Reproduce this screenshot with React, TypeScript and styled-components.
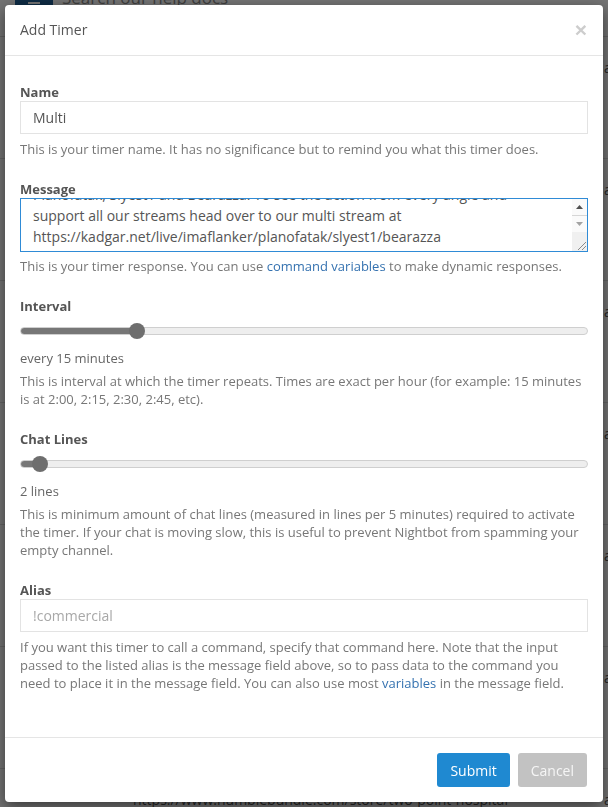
import React, { useEffect, useRef } from "react";
import styled, { createGlobalStyle } from "styled-components";

const GlobalStyle = createGlobalStyle`
  * { box-sizing: border-box; }
  html, body { margin: 0; padding: 0; height: 100%; overflow: hidden; }
  body {
    font-family: "Open Sans", "Liberation Sans", sans-serif;
    background: #fff;
    color: #555;
  }
`;

/* ---------- page behind the dialog ---------- */

const Page = styled.div`
  height: 100vh;
  overflow: hidden;
  background: #f4f4f4;
`;

const TopBar = styled.header`
  display: flex;
  align-items: flex-start;
  gap: 9px;
  height: 68px;
  margin-top: -31px;
  padding-left: 15px;
  background: #fff;
  border-bottom: 1px solid #d8d8d8;
`;

const MenuButton = styled.div`
  width: 38px;
  height: 36px;
  background: #1f5f96;
  display: flex;
  flex-direction: column;
  justify-content: flex-end;
  align-items: center;
  gap: 4px;
  padding-bottom: 1px;
`;

const MenuBar = styled.span`
  width: 12px;
  height: 2px;
  background: #fff;
`;

const SearchText = styled.div`
  padding-top: 11px;
  font-size: 17px;
  line-height: 36px;
  color: #8a8a8a;
`;

const TimerRow = styled.div`
  display: flex;
  height: 122px;
  padding-top: 21px;
  border-bottom: 1px solid #ddd;
  background: #fff;
`;

const RowMessage = styled.div`
  flex: 0 0 604px;
  padding-left: 133px;
  font-size: 14px;
  line-height: 20px;
  color: #555;
`;

const RowAction = styled.div`
  font-size: 14px;
  line-height: 20px;
  color: #555;
`;

/* ---------- dialog ---------- */

const Backdrop = styled.div`
  position: fixed;
  inset: 0;
  background: rgba(0, 0, 0, 0.55);
`;

const DialogLayer = styled.div`
  position: fixed;
  inset: 0;
  padding: 5px 0 0 5px;
`;

const Modal = styled.div`
  width: 598px;
  height: 797px;
  background: #fff;
  border-radius: 4px;
  box-shadow: 0 5px 15px rgba(0, 0, 0, 0.5);
  display: flex;
  flex-direction: column;
`;

const Header = styled.div`
  height: 51px;
  flex: 0 0 auto;
  display: flex;
  align-items: center;
  justify-content: space-between;
  padding: 0 16px 1px 15px;
  border-bottom: 1px solid #e5e5e5;
`;

const Title = styled.h4`
  margin: 0;
  font-size: 14px;
  font-weight: 400;
  color: #555;
`;

const Close = styled.button`
  border: 0;
  background: none;
  padding: 0;
  font-family: "Liberation Sans", sans-serif;
  font-size: 21px;
  font-weight: 700;
  line-height: 1;
  color: #cdcdcd;
  cursor: pointer;
`;

const Body = styled.div`
  flex: 1;
  padding: 27px 15px 0 15px;
`;

const Group = styled.div`
  margin-bottom: 22px;
`;

const Label = styled.label`
  display: block;
  font-size: 13px;
  font-weight: 700;
  line-height: 18px;
  color: #555;
`;

const TextInput = styled.input`
  display: block;
  width: 100%;
  height: 33px;
  padding: 0 12px;
  border: 1px solid #e3e3e3;
  border-radius: 0;
  font-family: inherit;
  font-size: 14px;
  color: #555;
  outline: none;
  &::placeholder {
    color: #a8a8a8;
  }
`;

const AreaWrap = styled.div`
  position: relative;
  height: 54px;
`;

const TextArea = styled.textarea`
  display: block;
  width: 100%;
  height: 54px;
  padding: 6px 28px 4px 12px;
  border: 1px solid #2f8bd6;
  border-radius: 0;
  font-family: inherit;
  font-size: 14px;
  line-height: 21px;
  color: #555;
  caret-color: #222;
  resize: none;
  outline: none;
  overflow-y: scroll;
  scrollbar-width: none;
  &::-webkit-scrollbar {
    display: none;
  }
`;

const ScrollBar = styled.div`
  position: absolute;
  top: 1px;
  right: 1px;
  bottom: 1px;
  width: 15px;
  display: flex;
  flex-direction: column;
  background: #fafafa;
`;

const ScrollArrow = styled.div<{ $divider?: boolean }>`
  height: 17px;
  display: flex;
  align-items: center;
  justify-content: center;
  border-bottom: ${(p) => (p.$divider ? "1px solid #d6d6d6" : "none")};
`;

const Resizer = styled.div`
  margin-top: auto;
  height: 19px;
  background: #f0f0f0;
  display: flex;
  align-items: flex-end;
  justify-content: flex-end;
  padding: 0 1px 1px 0;
`;

const Help = styled.p<{ $gap?: number }>`
  margin: ${(p) => p.$gap ?? 6}px 0 0;
  font-size: 13px;
  line-height: 18px;
  color: #777;
`;

const Link = styled.a`
  color: #3572b0;
  text-decoration: none;
`;

const Range = styled.input<{ $fill: number }>`
  display: block;
  width: 100%;
  height: 16px;
  margin: 8px 0 0;
  background: transparent;
  appearance: none;
  -webkit-appearance: none;
  &::-webkit-slider-runnable-track {
    height: 8px;
    border-radius: 4px;
    border: 1px solid #cfcfcf;
    background: linear-gradient(
      to right,
      #777 0,
      #777 calc(8px + ${(p) => p.$fill} * (100% - 16px)),
      #eee calc(8px + ${(p) => p.$fill} * (100% - 16px)),
      #eee 100%
    );
  }
  &::-webkit-slider-thumb {
    -webkit-appearance: none;
    appearance: none;
    width: 16px;
    height: 16px;
    margin-top: -5px;
    border: 0;
    border-radius: 50%;
    background: #6e6e6e;
  }
`;

const Value = styled.div`
  margin-top: 10px;
  font-size: 13px;
  line-height: 18px;
  color: #666;
`;

const Footer = styled.div`
  flex: 0 0 auto;
  display: flex;
  justify-content: flex-end;
  gap: 8px;
  padding: 15px 16px 15px 15px;
  border-top: 1px solid #e5e5e5;
`;

const Button = styled.button<{ $primary?: boolean }>`
  height: 34px;
  padding: 0 13px;
  border: 0;
  border-radius: 3px;
  font-family: inherit;
  font-size: 14px;
  color: ${(p) => (p.$primary ? "#fff" : "#f5f5f5")};
  background: ${(p) => (p.$primary ? "#1f89d1" : "#c2c2c2")};
  cursor: pointer;
`;

const message =
  "Imaflanker is playing together with the squad today!\nPlanofatak, Slyest1 and Bearazza. To see the action from every angle and support all our streams head over to our multi stream at https://kadgar.net/live/imaflanker/planofatak/slyest1/bearazza";

function Slider({ min, max, value }: { min: number; max: number; value: number }) {
  const frac = (value - min) / (max - min);
  return <Range type="range" min={min} max={max} defaultValue={value} $fill={frac} />;
}

function MessageBox() {
  const ref = useRef<HTMLTextAreaElement>(null);
  useEffect(() => {
    const el = ref.current;
    if (!el) return;
    el.focus();
    el.setSelectionRange(message.length, message.length);
    el.scrollTop = el.scrollHeight;
  }, []);
  return (
    <AreaWrap>
      <TextArea ref={ref} defaultValue={message} spellCheck />
      <ScrollBar>
        <ScrollArrow $divider>
          <svg width="7" height="4" viewBox="0 0 7 4">
            <path d="M0 4 L3.5 0 L7 4 Z" fill="#505050" />
          </svg>
        </ScrollArrow>
        <ScrollArrow>
          <svg width="7" height="4" viewBox="0 0 7 4">
            <path d="M0 0 L7 0 L3.5 4 Z" fill="#a3a3a3" />
          </svg>
        </ScrollArrow>
        <Resizer>
          <svg width="9" height="9" viewBox="0 0 9 9">
            <path d="M9 1 L1 9 M9 5 L5 9" stroke="#8a8a8a" strokeWidth="1" />
          </svg>
        </Resizer>
      </ScrollBar>
    </AreaWrap>
  );
}

const rows = [
  "Follow us on twitter for updates",
  "Join the discord to hang out",
  "Check out the merch store",
  "Remember to hit the follow button",
  "Use !commands to see everything",
  "Grab Two Point Hospital here:",
  "https://www.humblebundle.com/store/two-point-hospital",
];

export default function App() {
  return (
    <>
      <GlobalStyle />
      <Page>
        <TopBar>
          <MenuButton>
            <MenuBar />
            <MenuBar />
            <MenuBar />
          </MenuButton>
          <SearchText>Search our help docs</SearchText>
        </TopBar>
        {rows.map((r) => (
          <TimerRow key={r}>
            <RowMessage>{r}</RowMessage>
            <RowAction>alias</RowAction>
          </TimerRow>
        ))}
      </Page>
      <Backdrop />
      <DialogLayer>
        <Modal role="dialog" aria-labelledby="add-timer-title">
          <Header>
            <Title id="add-timer-title">Add Timer</Title>
            <Close aria-label="Close">×</Close>
          </Header>
          <Body>
            <Group>
              <Label>Name</Label>
              <TextInput defaultValue="Multi" />
              <Help>This is your timer name. It has no significance but to remind you what this timer does.</Help>
            </Group>
            <Group>
              <Label>Message</Label>
              <MessageBox />
              <Help $gap={5}>
                This is your timer response. You can use <Link href="#">command variables</Link> to make dynamic
                responses.
              </Help>
            </Group>
            <Group>
              <Label>Interval</Label>
              <Slider min={4} max={60} value={15} />
              <Value>every 15 minutes</Value>
              <Help $gap={5}>
                This is interval at which the timer repeats. Times are exact per hour (for example: 15 minutes is at
                2:00, 2:15, 2:30, 2:45, etc).
              </Help>
            </Group>
            <Group>
              <Label>Chat Lines</Label>
              <Slider min={0} max={100} value={2} />
              <Value>2 lines</Value>
              <Help $gap={5}>
                This is minimum amount of chat lines (measured in lines per 5 minutes) required to activate the timer.
                If your chat is moving slow, this is useful to prevent Nightbot from spamming your empty channel.
              </Help>
            </Group>
            <Group>
              <Label>Alias</Label>
              <TextInput placeholder="!commercial" />
              <Help>
                If you want this timer to call a command, specify that command here. Note that the input passed to the
                listed alias is the message field above, so to pass data to the command you need to place it in the
                message field. You can also use most <Link href="#">variables</Link> in the message field.
              </Help>
            </Group>
          </Body>
          <Footer>
            <Button $primary>Submit</Button>
            <Button>Cancel</Button>
          </Footer>
        </Modal>
      </DialogLayer>
    </>
  );
}
